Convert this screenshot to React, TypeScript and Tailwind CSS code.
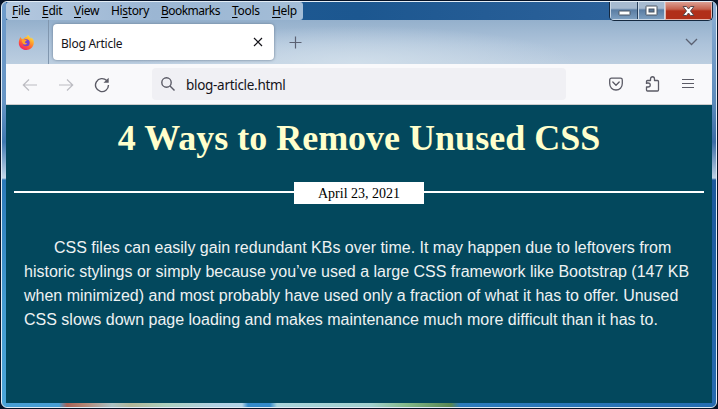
import React from "react";

const menus = [
  { key: "F", pre: "", rest: "ile", box: "w-[30px]", track: "tracking-[-0.3px]" },
  { key: "E", pre: "", rest: "dit", box: "w-[32px]", track: "tracking-[-0.3px]" },
  { key: "V", pre: "", rest: "iew", box: "w-[37px]", track: "tracking-[-0.3px]" },
  { key: "s", pre: "Hi", rest: "tory", box: "w-[50px]", track: "tracking-[-0.35px]" },
  { key: "B", pre: "", rest: "ookmarks", box: "w-[71px]", track: "tracking-[-0.55px]" },
  { key: "T", pre: "", rest: "ools", box: "w-[40px]", track: "tracking-[-0.3px]" },
  { key: "H", pre: "", rest: "elp", box: "w-[30px]", track: "tracking-[-0.3px]" },
];

function Firefox() {
  return (
    <svg width="17" height="17" viewBox="0 0 17 17">
      <defs>
        <linearGradient id="flame" x1=".8" y1="0" x2=".2" y2="1">
          <stop offset="0" stopColor="#fff044" />
          <stop offset=".4" stopColor="#ff9a2b" />
          <stop offset=".7" stopColor="#ff4f3c" />
          <stop offset="1" stopColor="#ec1576" />
        </linearGradient>
      </defs>
      <path d="M2.4 3.1 3.8 5 5.5 4.8C7 3.2 8 3 8.5 3L10 .8c.4 1.5 2.4 2.4 3.2 4.1l.2-1.4C15.500 5 16 7 15.800 9c-.3 4-3.500 7-7.400 7C4 16 .8 12.700.8 8.900.8 7 1.600 4.600 2.400 3.100Z" fill="url(#flame)" />
      <circle cx="8.200" cy="8.800" r="3.500" fill="#7540d5" />
      <path d="M3.800 5.200c1.200-.4 2.500 0 3 .7l2 .2c-.1.800-1.500 1-1.800 2-.2.900.9 1.500 2.200.9-.7 1.700-2.800 2-4 .9C4.200 9 3.600 7 3.800 5.200Z" fill="#ffa229" />
    </svg>
  );
}

function WindowButtons() {
  return (
    <div className="relative -mt-px mr-[-1px] flex h-[20px] w-[104px] overflow-hidden rounded-b-[5px] border border-t-0 border-[#14283f] text-white">
      <div className="flex w-[28px] items-center justify-center border border-t-0 border-r-0 border-[#c9d7e6] bg-linear-to-b from-[#a6bad0] from-40% via-[#5a7da3] via-50% to-[#7c9dbf] shadow-[inset_-1px_0_#28415e]">
        <svg className="mt-[5px]" width="13" height="6" viewBox="0 0 13 6"><rect x="1" y="1" width="11" height="4" rx=".5" fill="#fff" stroke="#4a5563" /></svg>
      </div>
      <div className="flex w-[27px] items-center justify-center border border-y-0 border-b border-[#c9d7e6] bg-linear-to-b from-[#a6bad0] from-40% via-[#5a7da3] via-50% to-[#7c9dbf]">
        <svg className="mt-px" width="13" height="11" viewBox="0 0 13 11"><rect x="1" y="1" width="11" height="9" rx=".5" fill="#fff" stroke="#4a5563" /><rect x="4" y="4" width="5" height="3" fill="#587697" stroke="#4a5563" /></svg>
      </div>
      <div className="flex grow items-center justify-center border border-t-0 border-[#e6b4aa] bg-linear-to-b from-[#dca093] from-5% via-[#c5624e] via-45% to-[#b12f19] to-55%">
        <svg className="mt-px" width="13" height="12" viewBox="0 0 13 12"><path d="M1 1.500h3.500l2 2.500 2-2.500H12L8.500 6l3.500 4.500H8.500l-2-2.500-2 2.500H1L4.500 6Z" fill="#fff" stroke="#59484c" /></svg>
      </div>
    </div>
  );
}

export default function App() {
  return (
    <div className="h-[409px] w-[718px] overflow-hidden bg-[#061226]">
      <div className="flex h-full flex-col p-px">
        <div className="relative flex grow flex-col overflow-hidden rounded-[6px] border border-[#e3edf6] bg-[linear-gradient(180deg,#6e9bcb_0px,#6795c4_100px,#3f78b1_140px,#c6d8e9_176px,#2b78b8_178px,#449bd1_300px,#4ba5d8_404px)]">
          <div className="absolute right-0 top-0 h-full w-1 bg-[linear-gradient(180deg,#8fb0d5_0px,#5d8bbb_100px,#3b6ba5_140px,#bfd1e4_176px,#1b589b_178px,#276bb0_404px)]" />
          <div className="absolute bottom-0 left-1 h-1 w-[706px] bg-[linear-gradient(90deg,#489fd5_0px,#489fd5_53px,#a76357_61px,#b38573_78px,#abc2c5_106px,#b1b698_125px,#acd0bf_160px,#b1d1e4_210px,#b1d4e8_236px,#348bca_242px,#348bca_264px,#a9d4db_271px,#a1d0cf_365px,#84b98a_400px,#578653_445px,#2c7cbd_454px,#256eb2_700px)]" />
          <div className="relative ml-1 flex h-[401px] w-[706px] flex-col">
            <div className="flex h-[18px] justify-between bg-linear-to-r from-[#205d98] via-[#1c5790] to-[#31659e]">
              <div className="flex w-[297px] rounded-[3px] bg-linear-to-r from-[#b4c8df] via-[#9bb6d3] to-[#a3bdd7] pl-[6px] font-['Noto_Sans','Open_Sans',sans-serif] text-[12px] leading-[17px] text-black">
                {menus.map((m) => (
                  <div key={m.rest} className={`${m.box} ${m.track} shrink-0 whitespace-nowrap`}>
                    {m.pre}
                    <span className="underline decoration-1 underline-offset-[2px]">{m.key}</span>
                    {m.rest}
                  </div>
                ))}
              </div>
              <WindowButtons />
            </div>
            <div className="flex h-[44px] shrink-0 items-center bg-[radial-gradient(ellipse_220px_38px_at_350px_44px,#d0deea,transparent),linear-gradient(180deg,#94b0cc_0%,#adc3da_55%,#bccee0_100%)]">
              <div className="flex h-full w-[43px] items-center justify-center border-r border-[#8096ae] pr-px"><Firefox /></div>
              <div className="ml-1 flex h-9 w-[221px] items-center justify-between rounded bg-white pl-2 pr-[11px] shadow-[0_0_3px_#64788e]">
                <span className="mt-[3px] font-['Noto_Sans','Open_Sans',sans-serif] text-[12px] tracking-[-0.25px] text-[#15141a]">Blog Article</span>
                <svg width="10" height="10" viewBox="0 0 10 10" fill="none" stroke="#15141a" strokeWidth="1.200"><path d="m1 1 8 8m0-8-8 8" /></svg>
              </div>
              <svg className="ml-[15px]" width="13" height="13" viewBox="0 0 13 13" fill="none" stroke="#5b6172" strokeWidth="1.200"><path d="M.5 6.500h12m-6-6v12" /></svg>
              <svg className="ml-auto mr-[14px]" width="13" height="8" viewBox="0 0 13 8" fill="none" stroke="#5b6172" strokeWidth="1.300"><path d="m1 1 5.500 5.500L12 1" /></svg>
            </div>
            <div className="flex h-[41px] shrink-0 items-center border-b border-[#cccccc] bg-[#f9f9fb]">
              <svg className="ml-4 mt-px" width="16" height="14" viewBox="0 0 16 14" fill="none" stroke="#bcbcc2" strokeWidth="1.200"><path d="M15 7H1.500M7 1.500 1.300 7 7 12.500" /></svg>
              <svg className="ml-5 mt-px" width="16" height="14" viewBox="0 0 16 14" fill="none" stroke="#bcbcc2" strokeWidth="1.200"><path d="M1 7h13.500M9 1.500l5.700 5.500L9 12.500" /></svg>
              <svg className="ml-5 mt-px" width="16" height="16" viewBox="0 0 16 16"><path d="M12.700 3.600A6.500 6.500 0 1 0 14.500 8" fill="none" stroke="#5b5b66" strokeWidth="1.400" /><path d="M14.700.7v5H9.500Z" fill="#5b5b66" /></svg>
              <div className="ml-[42px] flex h-8 w-[414px] items-center rounded bg-[#f0f0f4] pl-2">
                <svg width="16" height="16" viewBox="0 0 16 16" fill="none" stroke="#5b5b66" strokeWidth="1.400"><circle cx="6.500" cy="6.500" r="4.700" /><path d="m10 10 4.500 4.500" /></svg>
                <span className="ml-[10px] mt-[2px] font-['Noto_Sans','Open_Sans',sans-serif] text-[13.500px] tracking-[-0.3px] text-[#15141a]">blog-article.html</span>
              </div>
              <svg className="ml-[43px]" width="14" height="14" viewBox="0 0 14 14" fill="none" stroke="#5b5b66" strokeWidth="1.300" strokeLinecap="round" strokeLinejoin="round"><path d="M2.500 1.200h9q1.800 0 1.800 1.800v3.500C13.300 10.300 10.600 13 7 13S.7 10.300.7 6.500V3q0-1.800 1.800-1.800ZM3.800 5 7 8.200 10.200 5" /></svg>
              <svg className="ml-[22px]" width="15" height="16" viewBox="0 0 15 16" fill="none" stroke="#5b5b66" strokeWidth="1.300" strokeLinejoin="round"><path d="M1.500 8V5.500Q1.500 4.500 2.500 4.500h3V3c0-3 4-3 4 0v1.500h3q1 0 1 1v8.500q0 1-1 1h-10q-1 0-1-1v-3H3c3 0 3-4 0-4H1.500" /></svg>
              <svg className="ml-[21px]" width="14" height="12" viewBox="0 0 14 12" stroke="#5b5b66" strokeWidth="1.200"><path d="M1 1.500h12M1 5.500h12M1 9.500h12" /></svg>
            </div>
            <main className="flex grow flex-col bg-[#03485d]">
              <h1 className="mt-3 h-[42px] whitespace-nowrap text-center font-['Liberation_Serif',serif] text-[36px] font-bold leading-[42px] text-[#ffffcc]">4 Ways to Remove Unused CSS</h1>
              <div className="mx-2 mt-[23px] flex h-[22px] items-center">
                <div className="-mt-[2px] h-[2px] w-[280px] bg-white" />
                <time className="h-[22px] w-[130px] bg-white text-center font-['Liberation_Serif',serif] text-[14px] leading-[24px] text-black">April 23, 2021</time>
                <div className="-mt-[2px] h-[2px] grow bg-white" />
              </div>
              <p className="ml-[18px] mt-[32px] indent-[30px] whitespace-nowrap font-['Liberation_Sans',sans-serif] text-[16px] leading-6 text-[#eef2f3]">
                CSS files can easily gain redundant KBs over time. It may happen due to leftovers from<br />
                historic stylings or simply because you’ve used a large CSS framework like Bootstrap (147 KB<br />
                when minimized) and most probably have used only a fraction of what it has to offer. Unused<br />
                CSS slows down page loading and makes maintenance much more difficult than it has to.
              </p>
            </main>
          </div>
        </div>
      </div>
    </div>
  );
}
